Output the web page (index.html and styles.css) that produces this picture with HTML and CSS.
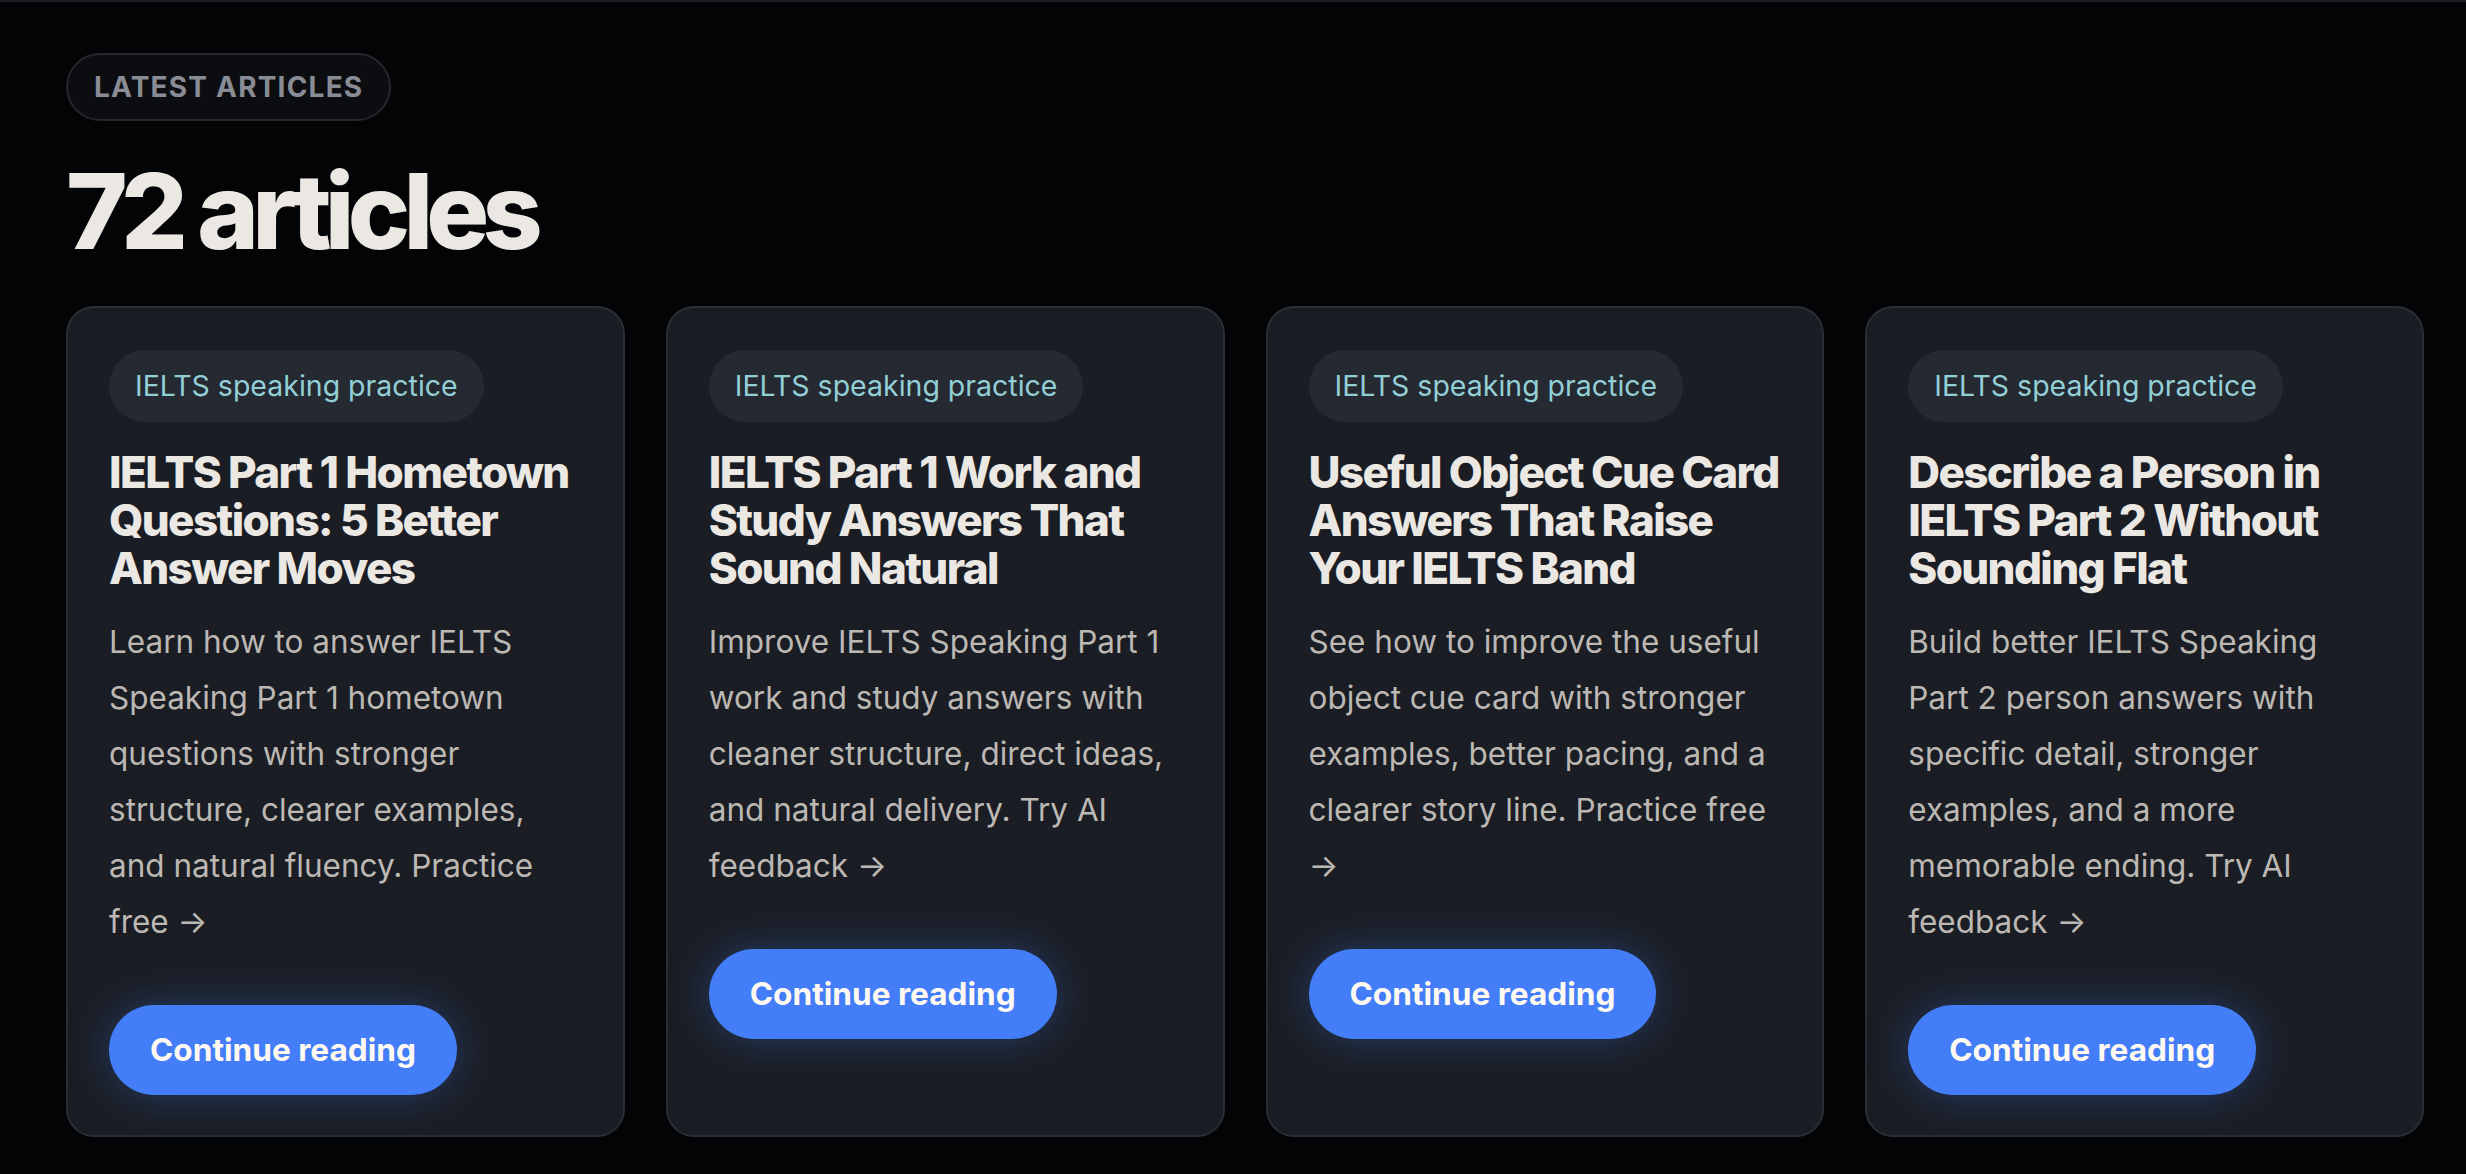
FILE: index.html
```html
<!DOCTYPE html>
<html lang="en">
<head>
<meta charset="utf-8">
<title>Latest articles</title>
<link rel="stylesheet" href="styles.css">
</head>
<body>
<section class="articles">
  <div class="eyebrow">Latest articles</div>
  <h1 class="count">72 articles</h1>
  <div class="grid">
    <article class="card">
      <span class="tag">IELTS speaking practice</span>
      <h2 class="title">IELTS Part 1 Hometown Questions: 5 Better Answer Moves</h2>
      <p class="desc">Learn how to answer IELTS Speaking Part 1 hometown questions with stronger structure, clearer examples, and natural fluency. Practice free →</p>
      <a class="btn" href="#">Continue reading</a>
    </article>
    <article class="card">
      <span class="tag">IELTS speaking practice</span>
      <h2 class="title">IELTS Part 1 Work and Study Answers That Sound Natural</h2>
      <p class="desc">Improve IELTS Speaking Part 1 work and study answers with cleaner structure, direct ideas, and natural delivery. Try AI feedback →</p>
      <a class="btn" href="#">Continue reading</a>
    </article>
    <article class="card">
      <span class="tag">IELTS speaking practice</span>
      <h2 class="title">Useful Object Cue Card Answers That Raise Your IELTS Band</h2>
      <p class="desc">See how to improve the useful object cue card with stronger examples, better pacing, and a clearer story line. Practice free →</p>
      <a class="btn" href="#">Continue reading</a>
    </article>
    <article class="card">
      <span class="tag">IELTS speaking practice</span>
      <h2 class="title">Describe a Person in IELTS Part 2 Without Sounding Flat</h2>
      <p class="desc">Build better IELTS Speaking Part 2 person answers with specific detail, stronger examples, and a more memorable ending. Try AI feedback →</p>
      <a class="btn" href="#">Continue reading</a>
    </article>
  </div>
</section>
</body>
</html>
```
FILE: styles.css
```css
* { box-sizing: border-box; }
html, body { margin: 0; padding: 0; }
body {
  background: #030406;
  font-family: Inter, "Noto Sans", "Liberation Sans", sans-serif;
  color: #ebe7e3;
  min-height: 1174px;
}
.articles {
  border-top: 2px solid #1c1e22;
  padding: 51px 42px 0 66px;
  display: flex;
  flex-direction: column;
  align-items: flex-start;
}
.eyebrow {
  height: 68px;
  padding: 0 26px;
  display: inline-flex;
  align-items: center;
  border: 2px solid #25272b;
  border-radius: 999px;
  background: #0c0d10;
  color: #8a8c95;
  font-size: 28px;
  font-weight: 700;
  letter-spacing: 0.043em;
  text-transform: uppercase;
}
.count {
  margin: 30px 0 0;
  font-size: 105px;
  line-height: 1.15;
  font-weight: 800;
  letter-spacing: -0.065em;
  color: #ebe7e3;
}
.grid {
  margin-top: 34px;
  width: 100%;
  display: grid;
  grid-template-columns: repeat(4, 1fr);
  gap: 41px;
}
.card {
  background: #1a1d23;
  border: 2px solid #2b2e34;
  border-radius: 28px;
  padding: 42px 41px 40px;
  display: flex;
  flex-direction: column;
  align-items: flex-start;
}
.tag {
  height: 72px;
  padding: 0 26px;
  display: inline-flex;
  align-items: center;
  border-radius: 999px;
  background: #252931;
  color: #93cfd6;
  font-size: 28.5px;
}
.title {
  margin: 26px 0 0;
  font-size: 44px;
  line-height: 48px;
  font-weight: 800;
  letter-spacing: -0.037em;
  color: #ebe7e3;
}
.desc {
  margin: 22px 0 0;
  font-size: 31.5px;
  line-height: 56px;
  color: #bcb8b4;
}
.btn {
  margin-top: 55px;
  height: 90px;
  padding: 0 41px;
  display: inline-flex;
  align-items: center;
  border-radius: 999px;
  background: #437ef8;
  color: #fff9f2;
  font-size: 31.6px;
  font-weight: 700;
  text-decoration: none;
  box-shadow: 0 0 46px rgba(67, 126, 248, 0.32);
}
```
